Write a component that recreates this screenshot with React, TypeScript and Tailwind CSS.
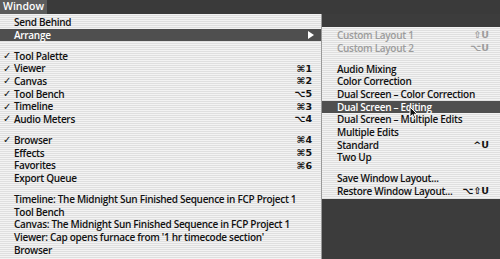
type ItemProps = {
  label: string;
  check?: boolean;
  shortcut?: string;
  active?: boolean;
  disabled?: boolean;
  arrow?: boolean;
};

const MainItem = ({ label, check, shortcut, active, arrow }: ItemProps) => (
  <div
    className={`flex h-[12.7px] items-center ${arrow ? "pr-[7px]" : "pr-[9px]"} ${
      active ? "bg-[#4f4f4f] text-white" : "text-[#111]"
    }`}
  >
    <span className="w-[14px] pl-[3px] text-[10px] leading-none [font-family:'DejaVu_Sans',sans-serif]">
      {check ? "✓" : ""}
    </span>
    <span className="flex-1 whitespace-nowrap">{label}</span>
    {shortcut && (
      <span className="whitespace-nowrap text-[9.5px] tracking-normal [font-family:'DejaVu_Sans',sans-serif]">
        {shortcut}
      </span>
    )}
    {arrow && (
      <svg width="6" height="8" viewBox="0 0 6 8">
        <polygon points="0,0 6,4 0,8" fill="#fff" />
      </svg>
    )}
  </div>
);

const SubItem = ({ label, shortcut, active, disabled }: ItemProps) => (
  <div
    className={`flex h-[12.7px] items-center pl-[15px] pr-[11px] ${
      active ? "bg-[#4f4f4f] text-white" : disabled ? "text-[#9c9c9c]" : "text-[#111]"
    }`}
  >
    <span className="flex-1 whitespace-nowrap">{label}</span>
    {shortcut && (
      <span className="whitespace-nowrap text-[9.5px] tracking-normal [font-family:'DejaVu_Sans',sans-serif]">
        {shortcut}
      </span>
    )}
  </div>
);

const Sep = () => <div className="h-[8.3px]" />;

const stripes =
  "bg-[repeating-linear-gradient(to_bottom,#f3f3f3_0px,#f3f3f3_1px,#dfdfdf_1px,#dfdfdf_2px)]";

export default function App() {
  return (
    <div className="h-[259px] w-[500px] overflow-hidden bg-[#3c3c3c] text-[10px] font-semibold tracking-[-0.3px] [font-family:'Open_Sans',sans-serif]">
      <div className="flex h-[14px] bg-[#3a3a3a]">
        <div className="flex w-[47px] items-center justify-center bg-[#5c5c5c] text-[10.5px] tracking-normal text-white">
          Window
        </div>
      </div>
      <div className="flex">
        <div className={`h-[245px] w-[322px] border-r border-[#9a9a9a] pt-[2px] ${stripes}`}>
          <MainItem label="Send Behind" />
          <MainItem label="Arrange" active arrow />
          <Sep />
          <MainItem check label="Tool Palette" />
          <MainItem check label="Viewer" shortcut="⌘1" />
          <MainItem check label="Canvas" shortcut="⌘2" />
          <MainItem check label="Tool Bench" shortcut="⌥5" />
          <MainItem check label="Timeline" shortcut="⌘3" />
          <MainItem check label="Audio Meters" shortcut="⌥4" />
          <Sep />
          <MainItem check label="Browser" shortcut="⌘4" />
          <MainItem label="Effects" shortcut="⌘5" />
          <MainItem label="Favorites" shortcut="⌘6" />
          <MainItem label="Export Queue" />
          <Sep />
          <MainItem label="Timeline: The Midnight Sun Finished Sequence in FCP Project 1" />
          <MainItem label="Tool Bench" />
          <MainItem label="Canvas: The Midnight Sun Finished Sequence in FCP Project 1" />
          <MainItem label="Viewer: Cap opens furnace from '1 hr timecode section'" />
          <MainItem label="Browser" />
        </div>
        <div className={`relative mt-[13px] h-[172px] flex-1 pt-[2px] ${stripes}`}>
          <SubItem label="Custom Layout 1" shortcut="⇧U" disabled />
          <SubItem label="Custom Layout 2" shortcut="⌥U" disabled />
          <Sep />
          <SubItem label="Audio Mixing" />
          <SubItem label="Color Correction" />
          <SubItem label="Dual Screen – Color Correction" />
          <SubItem label="Dual Screen – Editing" active />
          <SubItem label="Dual Screen – Multiple Edits" />
          <SubItem label="Multiple Edits" />
          <SubItem label="Standard" shortcut="^U" />
          <SubItem label="Two Up" />
          <Sep />
          <SubItem label="Save Window Layout..." />
          <SubItem label="Restore Window Layout..." shortcut="⌥⇧U" />
          <svg
            width="9"
            height="14"
            viewBox="0 0 9 14"
            className="absolute left-[87px] top-[79px]"
          >
            <path d="M1 1 L1 11 L3.5 8.7 L5.3 12.8 L6.8 12.1 L5.1 8.2 L8.2 8.2 Z" fill="#111" stroke="#fff" strokeWidth="1" />
          </svg>
        </div>
      </div>
    </div>
  );
}
